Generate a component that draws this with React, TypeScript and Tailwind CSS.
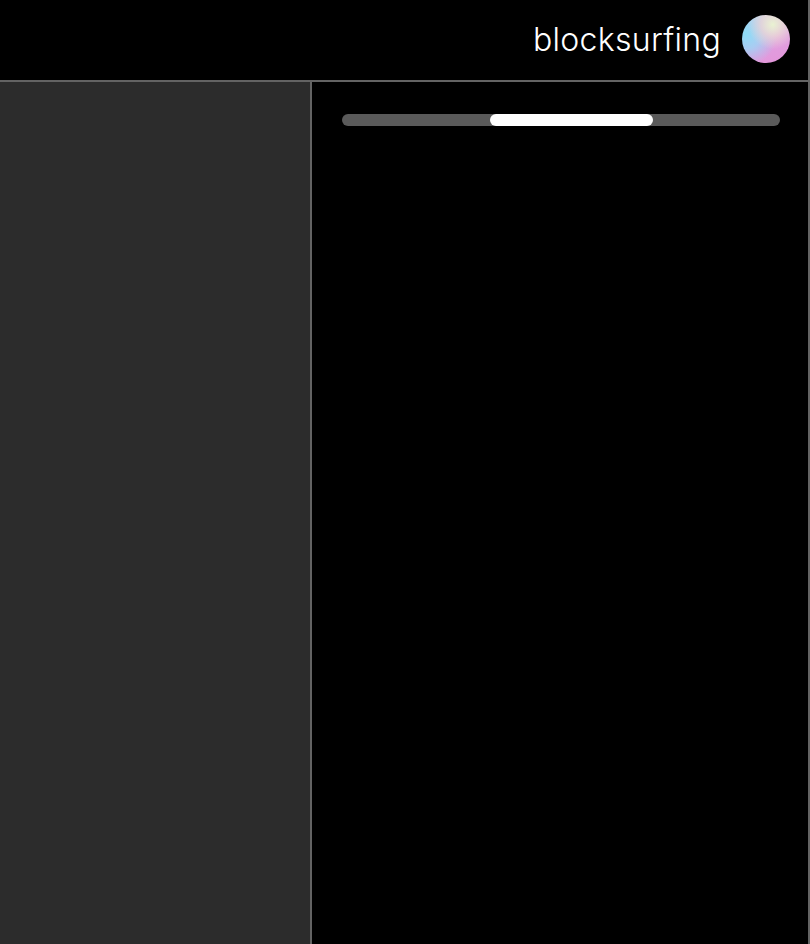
export default function App() {
  return (
    <div className="flex h-[944px] w-[810px] flex-col overflow-hidden bg-black font-['Inter',sans-serif] text-white">
      {/* top bar */}
      <header className="flex h-[82px] shrink-0 items-center justify-end gap-[21px] border-r-2 border-b-2 border-[#636363] pr-[18px] pb-0.5">
        <span className="mt-0.5 text-[32px] leading-none font-[350] tracking-[0.3px]">blocksurfing</span>
        <div className="h-12 w-12 rounded-full bg-[radial-gradient(circle_at_64%_20%,#e9f2d2_0%,rgba(235,212,214,0.8)_24%,transparent_50%),radial-gradient(circle_at_8%_40%,#8edcf6_0%,rgba(160,212,245,0.85)_28%,transparent_60%),linear-gradient(165deg,#c4f0f2_0%,#e09fe0_52%,#e496da_100%)]" />
      </header>

      <div className="flex min-h-0 flex-1">
        <aside className="w-[312px] shrink-0 border-r-2 border-[#636363] bg-[#2c2c2c]" />
        <main className="flex-1 border-r-2 border-[#636363] pt-8 pr-[28px] pl-[30px]">
          <div className="flex h-3 overflow-hidden rounded-full bg-[#5a5a5a] pl-[148px]">
            <div className="h-3 w-[163px] rounded-full bg-white" />
          </div>
        </main>
      </div>
    </div>
  );
}
